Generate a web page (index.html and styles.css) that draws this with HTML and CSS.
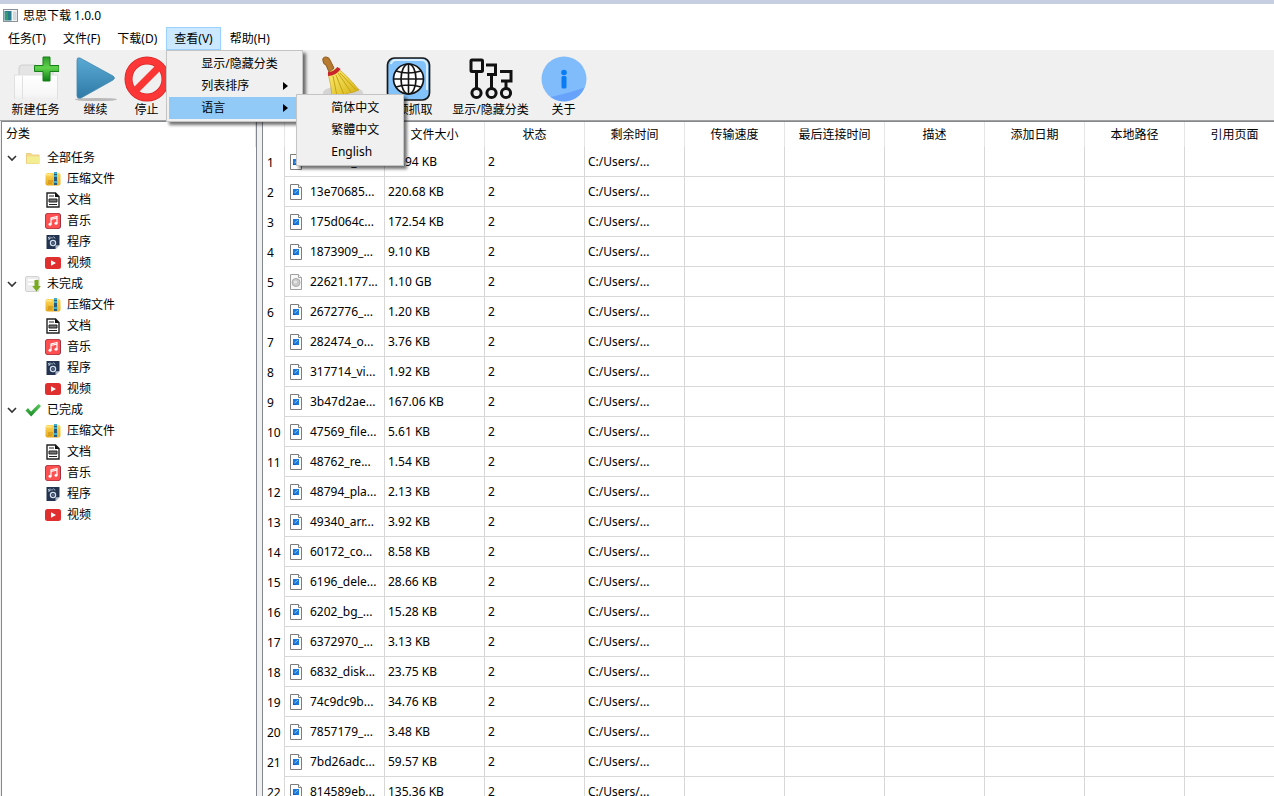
FILE: index.html
```html
<!DOCTYPE html>
<html lang="zh-CN">
<head>
<meta charset="utf-8">
<title>思思下载 1.0.0</title>
<link rel="stylesheet" href="styles.css">
</head>
<body>
<svg class="defs" aria-hidden="true">
  <defs>
    <linearGradient id="gBlue" x1="0" y1="0" x2="0" y2="1"><stop offset="0" stop-color="#5aaad4"/><stop offset="1" stop-color="#2f7aa6"/></linearGradient>
    <linearGradient id="gGreen" x1="0" y1="0" x2="0" y2="1"><stop offset="0" stop-color="#2e9b2a"/><stop offset=".45" stop-color="#5fd24c"/><stop offset="1" stop-color="#0d7d14"/></linearGradient>
    <linearGradient id="gPaper" x1="0" y1="0" x2="0" y2="1"><stop offset="0" stop-color="#ffffff"/><stop offset=".8" stop-color="#f7f7f7"/><stop offset="1" stop-color="#efefef"/></linearGradient>
    <linearGradient id="gYellow" x1="0" y1="0" x2="0" y2="1"><stop offset="0" stop-color="#ffd95a"/><stop offset="1" stop-color="#e3a81c"/></linearGradient>
    <linearGradient id="gCheck" x1="0" y1="0" x2="0" y2="1"><stop offset="0" stop-color="#5cc95c"/><stop offset="1" stop-color="#178a26"/></linearGradient>
    <linearGradient id="gBroom" x1="0" y1="0" x2="1" y2="1"><stop offset="0" stop-color="#fff27a"/><stop offset="1" stop-color="#d3ae0c"/></linearGradient>
  </defs>
  <symbol id="chev" viewBox="0 0 10 10"><path d="M1 3l4 4 4-4" fill="none" stroke="#333" stroke-width="1.6"/></symbol>
  <symbol id="folder" viewBox="0 0 16 16"><path d="M1.500 3.500h4.500l1.500 1.500h6.500v8.500h-12.500z" fill="#f3d98f" stroke="#eccd83"/><path d="M2 6.500h12v7h-12z" fill="#f4ee93"/></symbol>
  <symbol id="zip" viewBox="0 0 16 16"><rect x=".5" y="2" width="15" height="12.500" rx="2" fill="url(#gYellow)"/><path d="M1 3h5l1 1.500H1z" fill="#ffe787"/><path d="M3 10h5M3 12h4" stroke="#c88a14"/><path d="M9 1h3v13H9z" fill="#255a80"/><path d="M9 2h3M9 5h3M9 11h3" stroke="#49c6e3" stroke-width="1.500"/><path d="M14 4v10" stroke="#f8c83c"/></symbol>
  <symbol id="doc" viewBox="0 0 16 16"><path d="M2 1h8.500L14 4.500V15H2z" fill="#fff" stroke="#222" stroke-width="1.400"/><path d="M10 .5V5h4.500z" fill="#111"/><path d="M4 4h5M4 12.500h8" stroke="#222"/><path d="M4 7h8v3H4z" fill="#777" stroke="#222"/></symbol>
  <symbol id="music" viewBox="0 0 16 16"><rect width="16" height="16" rx="3" fill="#8c2b3b"/><rect x=".6" y=".6" width="14.600" height="14.800" rx="3" fill="#ff4f50"/><path d="M6 11V5l6-1.500V10M6 6.500l6-1.500" fill="none" stroke="#fff" stroke-width="1.200"/><circle cx="5" cy="11.200" r="1.500" fill="#fff"/><circle cx="11" cy="10.200" r="1.500" fill="#fff"/></symbol>
  <symbol id="app" viewBox="0 0 16 16"><path d="M1.500 1h13v10l-4 4h-9z" fill="#22344f"/><path d="M10.500 15v-3.500l4-.5z" fill="#b9c4d2"/><circle cx="8" cy="9" r="2.600" fill="none" stroke="#d5e0ef" stroke-width="1.300"/><circle cx="8" cy="9" r=".8" fill="#8fa6c4"/><path d="M3 3l2 2M5 2.500v2.500M7 3v1.500M8.500 2.500l1.500 2M3 5h2" stroke="#b9c8da"/></symbol>
  <symbol id="video" viewBox="0 0 16 16"><rect y="2" width="16" height="12" rx="2.500" fill="#e02f2f"/><path d="M6 5.200v5.600L11 8z" fill="#fff"/></symbol>
  <symbol id="todo" viewBox="0 0 16 16"><rect x=".5" y=".5" width="13.500" height="15" rx="1.500" fill="#ececec" stroke="#d1d1d1"/><path d="M3 4h8M3 8h6" stroke="#fff" stroke-width="2"/><path d="M9.500 4h4v6h2.300L11.500 15.500 7.200 10h2.300z" fill="#79ab20"/></symbol>
  <symbol id="done" viewBox="0 0 16 16"><path d="M.5 8.500L3 6l3 3.500L13.500 2 16 4 6.200 14.500z" fill="url(#gCheck)"/></symbol>
  <symbol id="img" viewBox="0 0 12 16"><path d="M.5.500h8l3 3v12H.500z" fill="#fcfcfc" stroke="#7d7d7d"/><path d="M8.500.500v3h3" fill="#fff" stroke="#7d7d7d"/><rect x="3" y="5" width="6" height="6" fill="#1d79d8"/><path d="M3 8.500l3 2.500H3z" fill="#0b5cb5"/><path d="M4.500 9L8 6" stroke="#86c6ff"/></symbol>
  <symbol id="disc" viewBox="0 0 12 16"><path d="M.5.500h8l3 3v12H.500z" fill="#f8f8f8" stroke="#a0a0a0"/><path d="M8.500.500v3h3" fill="#fff" stroke="#a0a0a0"/><circle cx="6" cy="8.500" r="4" fill="#c9c9c9" stroke="#adadad"/><circle cx="5.500" cy="8" r="1.500" fill="#e9e9e9"/></symbol>
</svg>

<header class="titlebar">
  <svg class="app-icon" viewBox="0 0 15 13"><rect x=".5" y=".5" width="14" height="12" fill="#f4f4f4" stroke="#8b8f96"/><rect x="1.500" y="2" width="7" height="9.500" fill="#287c8d"/><path d="M2 3h3v8H2z" fill="#3b9a6c"/><path d="M10 2.500h3.500v8.500H10z" fill="#d3d8dc"/></svg>
  <h1 class="title">思思下载 1.0.0</h1>
</header>

<nav class="menubar">
  <div class="menu"><button class="menu-button">任务(T)</button></div>
  <div class="menu"><button class="menu-button">文件(F)</button></div>
  <div class="menu"><button class="menu-button">下载(D)</button></div>
  <div class="menu">
    <button class="menu-button is-open" aria-expanded="true">查看(V)</button>
    <div class="popup popup-view" role="menu">
      <button class="popup-item" role="menuitem">显示/隐藏分类</button>
      <button class="popup-item" role="menuitem">列表排序<span class="arrow"></span></button>
      <div class="submenu">
        <button class="popup-item is-active" role="menuitem" aria-expanded="true">语言<span class="arrow"></span></button>
        <div class="popup popup-language" role="menu">
          <button class="popup-item" role="menuitem">简体中文</button>
          <button class="popup-item" role="menuitem">繁體中文</button>
          <button class="popup-item" role="menuitem">English</button>
        </div>
      </div>
    </div>
  </div>
  <div class="menu"><button class="menu-button">帮助(H)</button></div>
</nav>

<div class="toolbar">
  <button class="tool tool-medium">
    <svg class="tool-icon" viewBox="0 0 46 46"><path d="M6 20V12q0-3 3-3h14l3 3h14v9z" fill="#e4e4e4" stroke="#d0d0d0"/><path d="M1 19h44v24H1z" fill="url(#gPaper)"/><path d="M1 19h44M1.500 19v24M44.500 19v24M9.500 20v23" stroke="#e0e0e0"/><path d="M30 1h7v8.500h9v6h-9V25h-7v-9.500h-8.500v-6H30z" fill="url(#gGreen)" stroke="#168118"/></svg>
    <span>新建任务</span>
  </button>
  <button class="tool">
    <svg class="tool-icon" viewBox="0 0 46 46"><ellipse cx="23" cy="43.500" rx="21" ry="1.600" fill="#b9b9b9"/><path d="M4 4q0-3 3-2l33 18q3 2 0 4L8 42q-4 1-4-2z" fill="url(#gBlue)" stroke="#3f88b1" stroke-width=".8"/></svg>
    <span>继续</span>
  </button>
  <button class="tool">
    <svg class="tool-icon" viewBox="0 0 46 46"><circle cx="23" cy="23" r="18.500" fill="none" stroke="#d62525" stroke-width="8"/><circle cx="23" cy="23" r="18.500" fill="none" stroke="#fb3737" stroke-width="6.500"/><path d="M10.500 35.500l25-25" stroke="#fb3434" stroke-width="7"/></svg>
    <span>停止</span>
  </button>
  <button class="tool tool-clean" aria-label="清理">
    <svg class="tool-icon" viewBox="0 0 46 46"><ellipse cx="23" cy="37" rx="20" ry="7" fill="#d4d4d4"/><path d="M3 5q-1-4 3-4 3 0 4 3l4 8-5 4-3-7Q3 8 3 5z" fill="#b77a31" stroke="#8f591c"/><path d="M8 17l9-5q10 7 22 22-6 3-10 3-9 4-17 4Q11 28 8 17z" fill="url(#gBroom)" stroke="#c19a16" stroke-width=".6"/><path d="M13 20l4 20M16 19l8 20M18 17l13 19M20 17l16 17" stroke="#c7a211" fill="none"/><path d="M8 18q7 0 11-6" fill="none" stroke="#c9252b" stroke-width="4"/></svg>
  </button>
  <button class="tool tool-medium">
    <svg class="tool-icon" viewBox="0 0 46 46"><rect x="1.500" y="2" width="42" height="42" rx="7" fill="#83c3fb" stroke="#171717" stroke-width="1.700"/><path d="M5 8q1-4 5-4h25q6 0 6 6v24" fill="none" stroke="#d9efff" stroke-width="2"/><circle cx="22.500" cy="23" r="15" fill="#fff" stroke="#151515" stroke-width="1.700"/><ellipse cx="22.500" cy="23" rx="7.500" ry="15" fill="none" stroke="#151515" stroke-width="1.700"/><path d="M22.500 8v30M7.500 23h30M10 15q12 4 25 0M10 31q12-4 25 0" fill="none" stroke="#151515" stroke-width="1.600"/></svg>
    <span>视频抓取</span>
  </button>
  <button class="tool tool-wide">
    <svg class="tool-icon" viewBox="0 0 46 46"><g fill="none" stroke="#111" stroke-width="3"><rect x="3" y="4" width="11.500" height="11.500" rx="1"/><path d="M8.500 16v16M18 9h9.500v9.500H19M23.500 19v13M32 15.500h11V25H33M38 25v7"/><circle cx="8.500" cy="37" r="4.600"/><circle cx="23.500" cy="37" r="4.600"/><circle cx="38" cy="37" r="4.600"/></g></svg>
    <span>显示/隐藏分类</span>
  </button>
  <button class="tool">
    <svg class="tool-icon" viewBox="0 0 46 46"><circle cx="23" cy="23" r="22.500" fill="#80bcfc"/><path d="M9.500 41Q28 37 43.500 31.500A22.500 22.500 0 0 1 9.500 41z" fill="#68a3fb"/><circle cx="23" cy="16.500" r="2.800" fill="#087cf5"/><rect x="20.500" y="20" width="5" height="12.500" rx="1.500" fill="#087cf5"/></svg>
    <span>关于</span>
  </button>
</div>

<main class="workspace">
  <aside class="sidebar">
    <h2 class="sidebar-title">分类</h2>
    <ul class="tree">
      <li>
        <div class="node"><svg class="chevron"><use href="#chev"/></svg><svg class="node-icon"><use href="#folder"/></svg>全部任务</div>
        <ul class="branch">
          <li class="node"><svg class="node-icon"><use href="#zip"/></svg>压缩文件</li>
          <li class="node"><svg class="node-icon"><use href="#doc"/></svg>文档</li>
          <li class="node"><svg class="node-icon"><use href="#music"/></svg>音乐</li>
          <li class="node"><svg class="node-icon"><use href="#app"/></svg>程序</li>
          <li class="node"><svg class="node-icon"><use href="#video"/></svg>视频</li>
        </ul>
      </li>
      <li>
        <div class="node"><svg class="chevron"><use href="#chev"/></svg><svg class="node-icon"><use href="#todo"/></svg>未完成</div>
        <ul class="branch">
          <li class="node"><svg class="node-icon"><use href="#zip"/></svg>压缩文件</li>
          <li class="node"><svg class="node-icon"><use href="#doc"/></svg>文档</li>
          <li class="node"><svg class="node-icon"><use href="#music"/></svg>音乐</li>
          <li class="node"><svg class="node-icon"><use href="#app"/></svg>程序</li>
          <li class="node"><svg class="node-icon"><use href="#video"/></svg>视频</li>
        </ul>
      </li>
      <li>
        <div class="node"><svg class="chevron"><use href="#chev"/></svg><svg class="node-icon"><use href="#done"/></svg>已完成</div>
        <ul class="branch">
          <li class="node"><svg class="node-icon"><use href="#zip"/></svg>压缩文件</li>
          <li class="node"><svg class="node-icon"><use href="#doc"/></svg>文档</li>
          <li class="node"><svg class="node-icon"><use href="#music"/></svg>音乐</li>
          <li class="node"><svg class="node-icon"><use href="#app"/></svg>程序</li>
          <li class="node"><svg class="node-icon"><use href="#video"/></svg>视频</li>
        </ul>
      </li>
    </ul>
  </aside>

  <section class="list">
    <table class="files">
      <colgroup><col class="col-index"><col span="10" class="col-data"></colgroup>
      <thead>
        <tr><th></th><th></th><th>文件大小</th><th>状态</th><th>剩余时间</th><th>传输速度</th><th>最后连接时间</th><th>描述</th><th>添加日期</th><th>本地路径</th><th>引用页面</th></tr>
      </thead>
      <tbody>
        <tr><th>1</th><td><div class="file"><svg class="file-icon"><use href="#img"/></svg>118347_e...</div></td><td>12.94 KB</td><td>2</td><td>C:/Users/...</td><td></td><td></td><td></td><td></td><td></td><td></td></tr>
        <tr><th>2</th><td><div class="file"><svg class="file-icon"><use href="#img"/></svg>13e70685...</div></td><td>220.68 KB</td><td>2</td><td>C:/Users/...</td><td></td><td></td><td></td><td></td><td></td><td></td></tr>
        <tr><th>3</th><td><div class="file"><svg class="file-icon"><use href="#img"/></svg>175d064c...</div></td><td>172.54 KB</td><td>2</td><td>C:/Users/...</td><td></td><td></td><td></td><td></td><td></td><td></td></tr>
        <tr><th>4</th><td><div class="file"><svg class="file-icon"><use href="#img"/></svg>1873909_...</div></td><td>9.10 KB</td><td>2</td><td>C:/Users/...</td><td></td><td></td><td></td><td></td><td></td><td></td></tr>
        <tr><th>5</th><td><div class="file"><svg class="file-icon"><use href="#disc"/></svg>22621.177...</div></td><td>1.10 GB</td><td>2</td><td>C:/Users/...</td><td></td><td></td><td></td><td></td><td></td><td></td></tr>
        <tr><th>6</th><td><div class="file"><svg class="file-icon"><use href="#img"/></svg>2672776_...</div></td><td>1.20 KB</td><td>2</td><td>C:/Users/...</td><td></td><td></td><td></td><td></td><td></td><td></td></tr>
        <tr><th>7</th><td><div class="file"><svg class="file-icon"><use href="#img"/></svg>282474_o...</div></td><td>3.76 KB</td><td>2</td><td>C:/Users/...</td><td></td><td></td><td></td><td></td><td></td><td></td></tr>
        <tr><th>8</th><td><div class="file"><svg class="file-icon"><use href="#img"/></svg>317714_vi...</div></td><td>1.92 KB</td><td>2</td><td>C:/Users/...</td><td></td><td></td><td></td><td></td><td></td><td></td></tr>
        <tr><th>9</th><td><div class="file"><svg class="file-icon"><use href="#img"/></svg>3b47d2ae...</div></td><td>167.06 KB</td><td>2</td><td>C:/Users/...</td><td></td><td></td><td></td><td></td><td></td><td></td></tr>
        <tr><th>10</th><td><div class="file"><svg class="file-icon"><use href="#img"/></svg>47569_file...</div></td><td>5.61 KB</td><td>2</td><td>C:/Users/...</td><td></td><td></td><td></td><td></td><td></td><td></td></tr>
        <tr><th>11</th><td><div class="file"><svg class="file-icon"><use href="#img"/></svg>48762_re...</div></td><td>1.54 KB</td><td>2</td><td>C:/Users/...</td><td></td><td></td><td></td><td></td><td></td><td></td></tr>
        <tr><th>12</th><td><div class="file"><svg class="file-icon"><use href="#img"/></svg>48794_pla...</div></td><td>2.13 KB</td><td>2</td><td>C:/Users/...</td><td></td><td></td><td></td><td></td><td></td><td></td></tr>
        <tr><th>13</th><td><div class="file"><svg class="file-icon"><use href="#img"/></svg>49340_arr...</div></td><td>3.92 KB</td><td>2</td><td>C:/Users/...</td><td></td><td></td><td></td><td></td><td></td><td></td></tr>
        <tr><th>14</th><td><div class="file"><svg class="file-icon"><use href="#img"/></svg>60172_co...</div></td><td>8.58 KB</td><td>2</td><td>C:/Users/...</td><td></td><td></td><td></td><td></td><td></td><td></td></tr>
        <tr><th>15</th><td><div class="file"><svg class="file-icon"><use href="#img"/></svg>6196_dele...</div></td><td>28.66 KB</td><td>2</td><td>C:/Users/...</td><td></td><td></td><td></td><td></td><td></td><td></td></tr>
        <tr><th>16</th><td><div class="file"><svg class="file-icon"><use href="#img"/></svg>6202_bg_...</div></td><td>15.28 KB</td><td>2</td><td>C:/Users/...</td><td></td><td></td><td></td><td></td><td></td><td></td></tr>
        <tr><th>17</th><td><div class="file"><svg class="file-icon"><use href="#img"/></svg>6372970_...</div></td><td>3.13 KB</td><td>2</td><td>C:/Users/...</td><td></td><td></td><td></td><td></td><td></td><td></td></tr>
        <tr><th>18</th><td><div class="file"><svg class="file-icon"><use href="#img"/></svg>6832_disk...</div></td><td>23.75 KB</td><td>2</td><td>C:/Users/...</td><td></td><td></td><td></td><td></td><td></td><td></td></tr>
        <tr><th>19</th><td><div class="file"><svg class="file-icon"><use href="#img"/></svg>74c9dc9b...</div></td><td>34.76 KB</td><td>2</td><td>C:/Users/...</td><td></td><td></td><td></td><td></td><td></td><td></td></tr>
        <tr><th>20</th><td><div class="file"><svg class="file-icon"><use href="#img"/></svg>7857179_...</div></td><td>3.48 KB</td><td>2</td><td>C:/Users/...</td><td></td><td></td><td></td><td></td><td></td><td></td></tr>
        <tr><th>21</th><td><div class="file"><svg class="file-icon"><use href="#img"/></svg>7bd26adc...</div></td><td>59.57 KB</td><td>2</td><td>C:/Users/...</td><td></td><td></td><td></td><td></td><td></td><td></td></tr>
        <tr><th>22</th><td><div class="file"><svg class="file-icon"><use href="#img"/></svg>814589eb...</div></td><td>135.36 KB</td><td>2</td><td>C:/Users/...</td><td></td><td></td><td></td><td></td><td></td><td></td></tr>
      </tbody>
    </table>
  </section>
</main>
</body>
</html>
```
FILE: styles.css
```css
* { box-sizing: border-box; }

body {
  margin: 0;
  height: 100vh;
  display: flex;
  flex-direction: column;
  overflow: hidden;
  border-top: 4px solid #c6cfe1;
  background: #fff;
  color: #000;
  font: 12px/16px "Noto Sans", "Noto Sans CJK SC", sans-serif;
}

button {
  border: 0;
  padding: 0;
  background: none;
  color: inherit;
  font: inherit;
  white-space: nowrap;
}

h1, h2, ul { margin: 0; padding: 0; font: inherit; list-style: none; }

.defs { position: absolute; width: 0; height: 0; }

.titlebar {
  display: flex;
  align-items: center;
  gap: 5px;
  height: 23px;
  padding-left: 3px;
}
.app-icon { width: 15px; height: 13px; }

.menubar {
  display: flex;
  gap: 1px;
  height: 24px;
  border-bottom: 1px solid #f0f0f0;
}
.menu { position: relative; }
.menu-button {
  height: 23px;
  padding: 1px 7px 0;
  border: 1px solid transparent;
}
.menu-button.is-open { background: #cce8ff; border-color: #99d1ff; }

.popup {
  position: absolute;
  z-index: 2;
  padding: 2px;
  border: 1px solid #c4c4c4;
  background: #f0f0f0;
  box-shadow: 3px 3px 3px rgba(0, 0, 0, .55);
}
.popup-view { top: 23px; left: 0; width: 137px; }
.popup-language { top: -3px; left: 127px; width: 108px; }
.submenu { position: relative; }
.popup-item {
  display: flex;
  align-items: center;
  justify-content: space-between;
  width: 100%;
  height: 22px;
  padding: 0 12px 0 32px;
}
.popup-item.is-active { background: #91c9f7; }
.arrow {
  border: 4px solid transparent;
  border-left: 5px solid #000;
  border-right: 0;
}

.toolbar {
  display: flex;
  height: 70px;
  padding-left: 1px;
  background: #f0f0f0;
  border-bottom: 1px solid #a0a0a0;
}
.tool {
  display: flex;
  flex-direction: column;
  align-items: center;
  width: 51px;
  padding-top: 5px;
}
.tool-medium { width: 69px; }
.tool-wide { width: 95px; }
.tool-clean { width: 63px; margin-left: 139px; }
.tool-icon { width: 46px; height: 46px; }

.workspace { display: flex; flex: 1; min-height: 0; gap: 5px; padding-left: 1px; background: #f0f0f0; }

.sidebar {
  width: 256px;
  border: solid #828790;
  border-width: 1px 1px 0 1px;
  background: #fff;
}
.sidebar-title {
  height: 25px;
  padding: 4px;
  border-right: 1px solid #e5e5e5;
}
.node { display: flex; align-items: center; height: 21px; gap: 6px; padding-left: 5px; }
.branch .node { padding-left: 43px; }
.chevron { width: 10px; height: 10px; margin-right: 2px; }
.node-icon { width: 16px; height: 16px; }

.list {
  flex: 1;
  min-width: 0;
  overflow: hidden;
  border: solid #828790;
  border-width: 1px 0 0 1px;
  background: #fff;
}
.files {
  width: 1022px;
  table-layout: fixed;
  border-collapse: separate;
  border-spacing: 0;
}
.col-index { width: 22px; }
.col-data { width: 100px; }
.files th, .files td {
  padding: 0 3px;
  border-right: 1px solid #d8d8d8;
  font-weight: 400;
  text-align: left;
  white-space: nowrap;
}
.files thead th { height: 25px; border-color: #e5e5e5; text-align: center; }
.files tbody th { height: 30px; padding: 2px 0 0 4px; }
.files td { border-bottom: 1px solid #d8d8d8; }
.file { display: flex; align-items: center; gap: 8px; padding-left: 2px; }
.file-icon { flex: none; width: 12px; height: 16px; }
```
